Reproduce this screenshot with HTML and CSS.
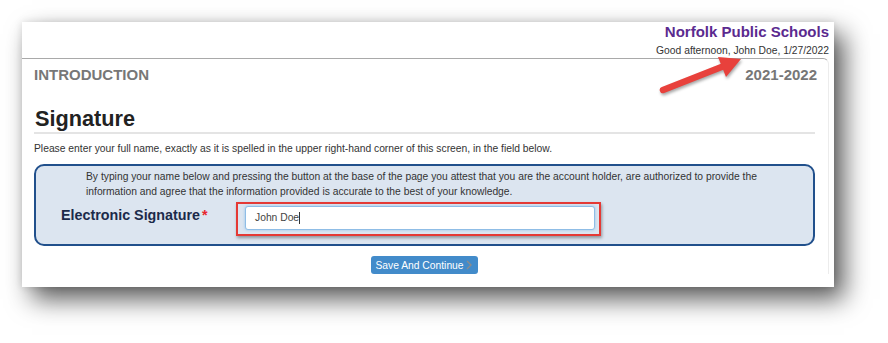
FILE: index.html
```html
<!DOCTYPE html>
<html lang="en">
  <head>
    <meta name="viewport" content="width=device-width, initial-scale=1.0" />
    <title>Signature</title>
    <link rel="stylesheet" href="styles.css">
  </head>
  <body>
    <div class="page">
      <div class="card">
        <div class="top-header">
          <p class="district">Norfolk Public Schools</p>
          <p class="greeting">Good afternoon, John Doe, 1/27/2022</p>
        </div>

        <div class="section">
          <div class="section-bar">
            <span class="section-name">INTRODUCTION</span>
            <span class="school-year">2021-2022</span>
          </div>

          <div class="content">
            <h1 class="title">Signature</h1>
            <p class="intro">Please enter your full name, exactly as it is spelled in the upper right-hand corner of this screen, in the field below.</p>

            <div class="sig-box">
              <p class="sig-note">By typing your name below and pressing the button at the base of the page you attest that you are the account holder, are authorized to provide the information and agree that the information provided is accurate to the best of your knowledge.</p>
              <div class="sig-row">
                <label class="sig-label">Electronic Signature<span class="req">*</span></label>
                <div class="highlight">
                  <div class="sig-input">John Doe<span class="caret"></span></div>
                </div>
              </div>
            </div>

            <div class="actions">
              <button class="btn-save">Save And Continue
                <svg width="6" height="10" viewBox="0 0 6 10"><polyline points="1,1 5,5 1,9" fill="none" stroke="#8c8c8c" stroke-width="1.4"/></svg>
              </button>
            </div>
          </div>
        </div>
      </div>

      <!-- callout arrow -->
      <svg class="arrow" width="888" height="343" viewBox="0 0 888 343">
        <line x1="663" y1="90" x2="724" y2="66" stroke="#e8413c" stroke-width="6.5" stroke-linecap="round"/>
        <polygon points="741,59 718,57 726,77" fill="#e8413c"/>
      </svg>
    </div>
  </body>
</html>
```

FILE: styles.css
```css
* {
  padding: 0;
  margin: 0;
  box-sizing: border-box;
}
body {
  font-family: "Liberation Sans", Arial, sans-serif;
  background-color: #ffffff;
  color: #333;
}
.page {
  position: relative;
  padding: 22px 0 0 22px;
  width: 888px;
  height: 343px;
  overflow: hidden;
}
.card {
  width: 812px;
  background: #ffffff;
  padding-bottom: 13px;
  box-shadow: 10px 12px 24px rgba(0, 0, 0, 0.65), 0 0 8px rgba(0, 0, 0, 0.12);
}
.top-header {
  text-align: right;
  padding: 1px 5px 1px 0;
}
.district {
  font-size: 15px;
  line-height: 17px;
  font-weight: bold;
  color: #5b2a8f;
}
.greeting {
  margin-top: 4px;
  font-size: 10.3px;
  line-height: 13px;
  color: #333;
}
.section {
  margin-right: 5px;
  border-top: 1px solid #a9a9a9;
  border-right: 1px solid #ececec;
  border-top-right-radius: 6px;
}
.section-bar {
  display: flex;
  justify-content: space-between;
  padding: 7px 11px 0 12px;
  font-size: 15px;
  line-height: 18px;
  font-weight: bold;
  color: #777;
}
.content {
  padding: 0 13px 0 12px;
}
.title {
  margin-top: 22px;
  font-size: 21.7px;
  line-height: 26px;
  font-weight: bold;
  color: #222;
  padding-left: 1px;
  border-bottom: 2px solid #e4e4e4;
}
.intro {
  margin-top: 8px;
  font-size: 10.3px;
  line-height: 13px;
  color: #333;
}
.sig-box {
  margin-top: 9px;
  background: #dce5f0;
  border: 2px solid #21508c;
  border-radius: 10px;
  padding: 3px 0 8px 50px;
}
.sig-note {
  width: 700px;
  font-size: 10.3px;
  line-height: 15px;
  color: #333;
}
.sig-row {
  display: flex;
  align-items: flex-start;
  margin-top: 3px;
}
.sig-label {
  width: 175px;
  margin-left: -25px;
  padding-top: 5px;
  font-size: 14.3px;
  line-height: 17px;
  font-weight: bold;
  color: #1b2a4a;
}
.req {
  color: #e8262d;
  margin-left: 2px;
}
.highlight {
  width: 365px;
  height: 34px;
  border: 2px solid #e53935;
  padding: 2px 4px 4px 7px;
  box-shadow: 1px 2px 3px rgba(0, 0, 0, 0.35);
}
.sig-input {
  height: 24px;
  background: #ffffff;
  border: 1px solid #8fbde6;
  border-radius: 3px;
  box-shadow: 0 0 3px rgba(102, 175, 233, 0.6);
  padding-left: 9px;
  font-size: 10.3px;
  line-height: 22px;
  color: #444;
  display: flex;
  align-items: center;
}
.caret {
  display: inline-block;
  width: 1px;
  height: 12px;
  background: #333;
}
.actions {
  display: flex;
  justify-content: center;
  margin-top: 10px;
}
.btn-save {
  display: flex;
  align-items: center;
  gap: 2px;
  height: 18px;
  padding: 0 6px 0 4px;
  background: #428bca;
  border: none;
  border-radius: 3px;
  color: #ffffff;
  font-family: "Liberation Sans", Arial, sans-serif;
  font-size: 10.3px;
}
.arrow {
  position: absolute;
  left: 0;
  top: 0;
  filter: drop-shadow(1px 2px 1.5px rgba(0, 0, 0, 0.35));
}
```
